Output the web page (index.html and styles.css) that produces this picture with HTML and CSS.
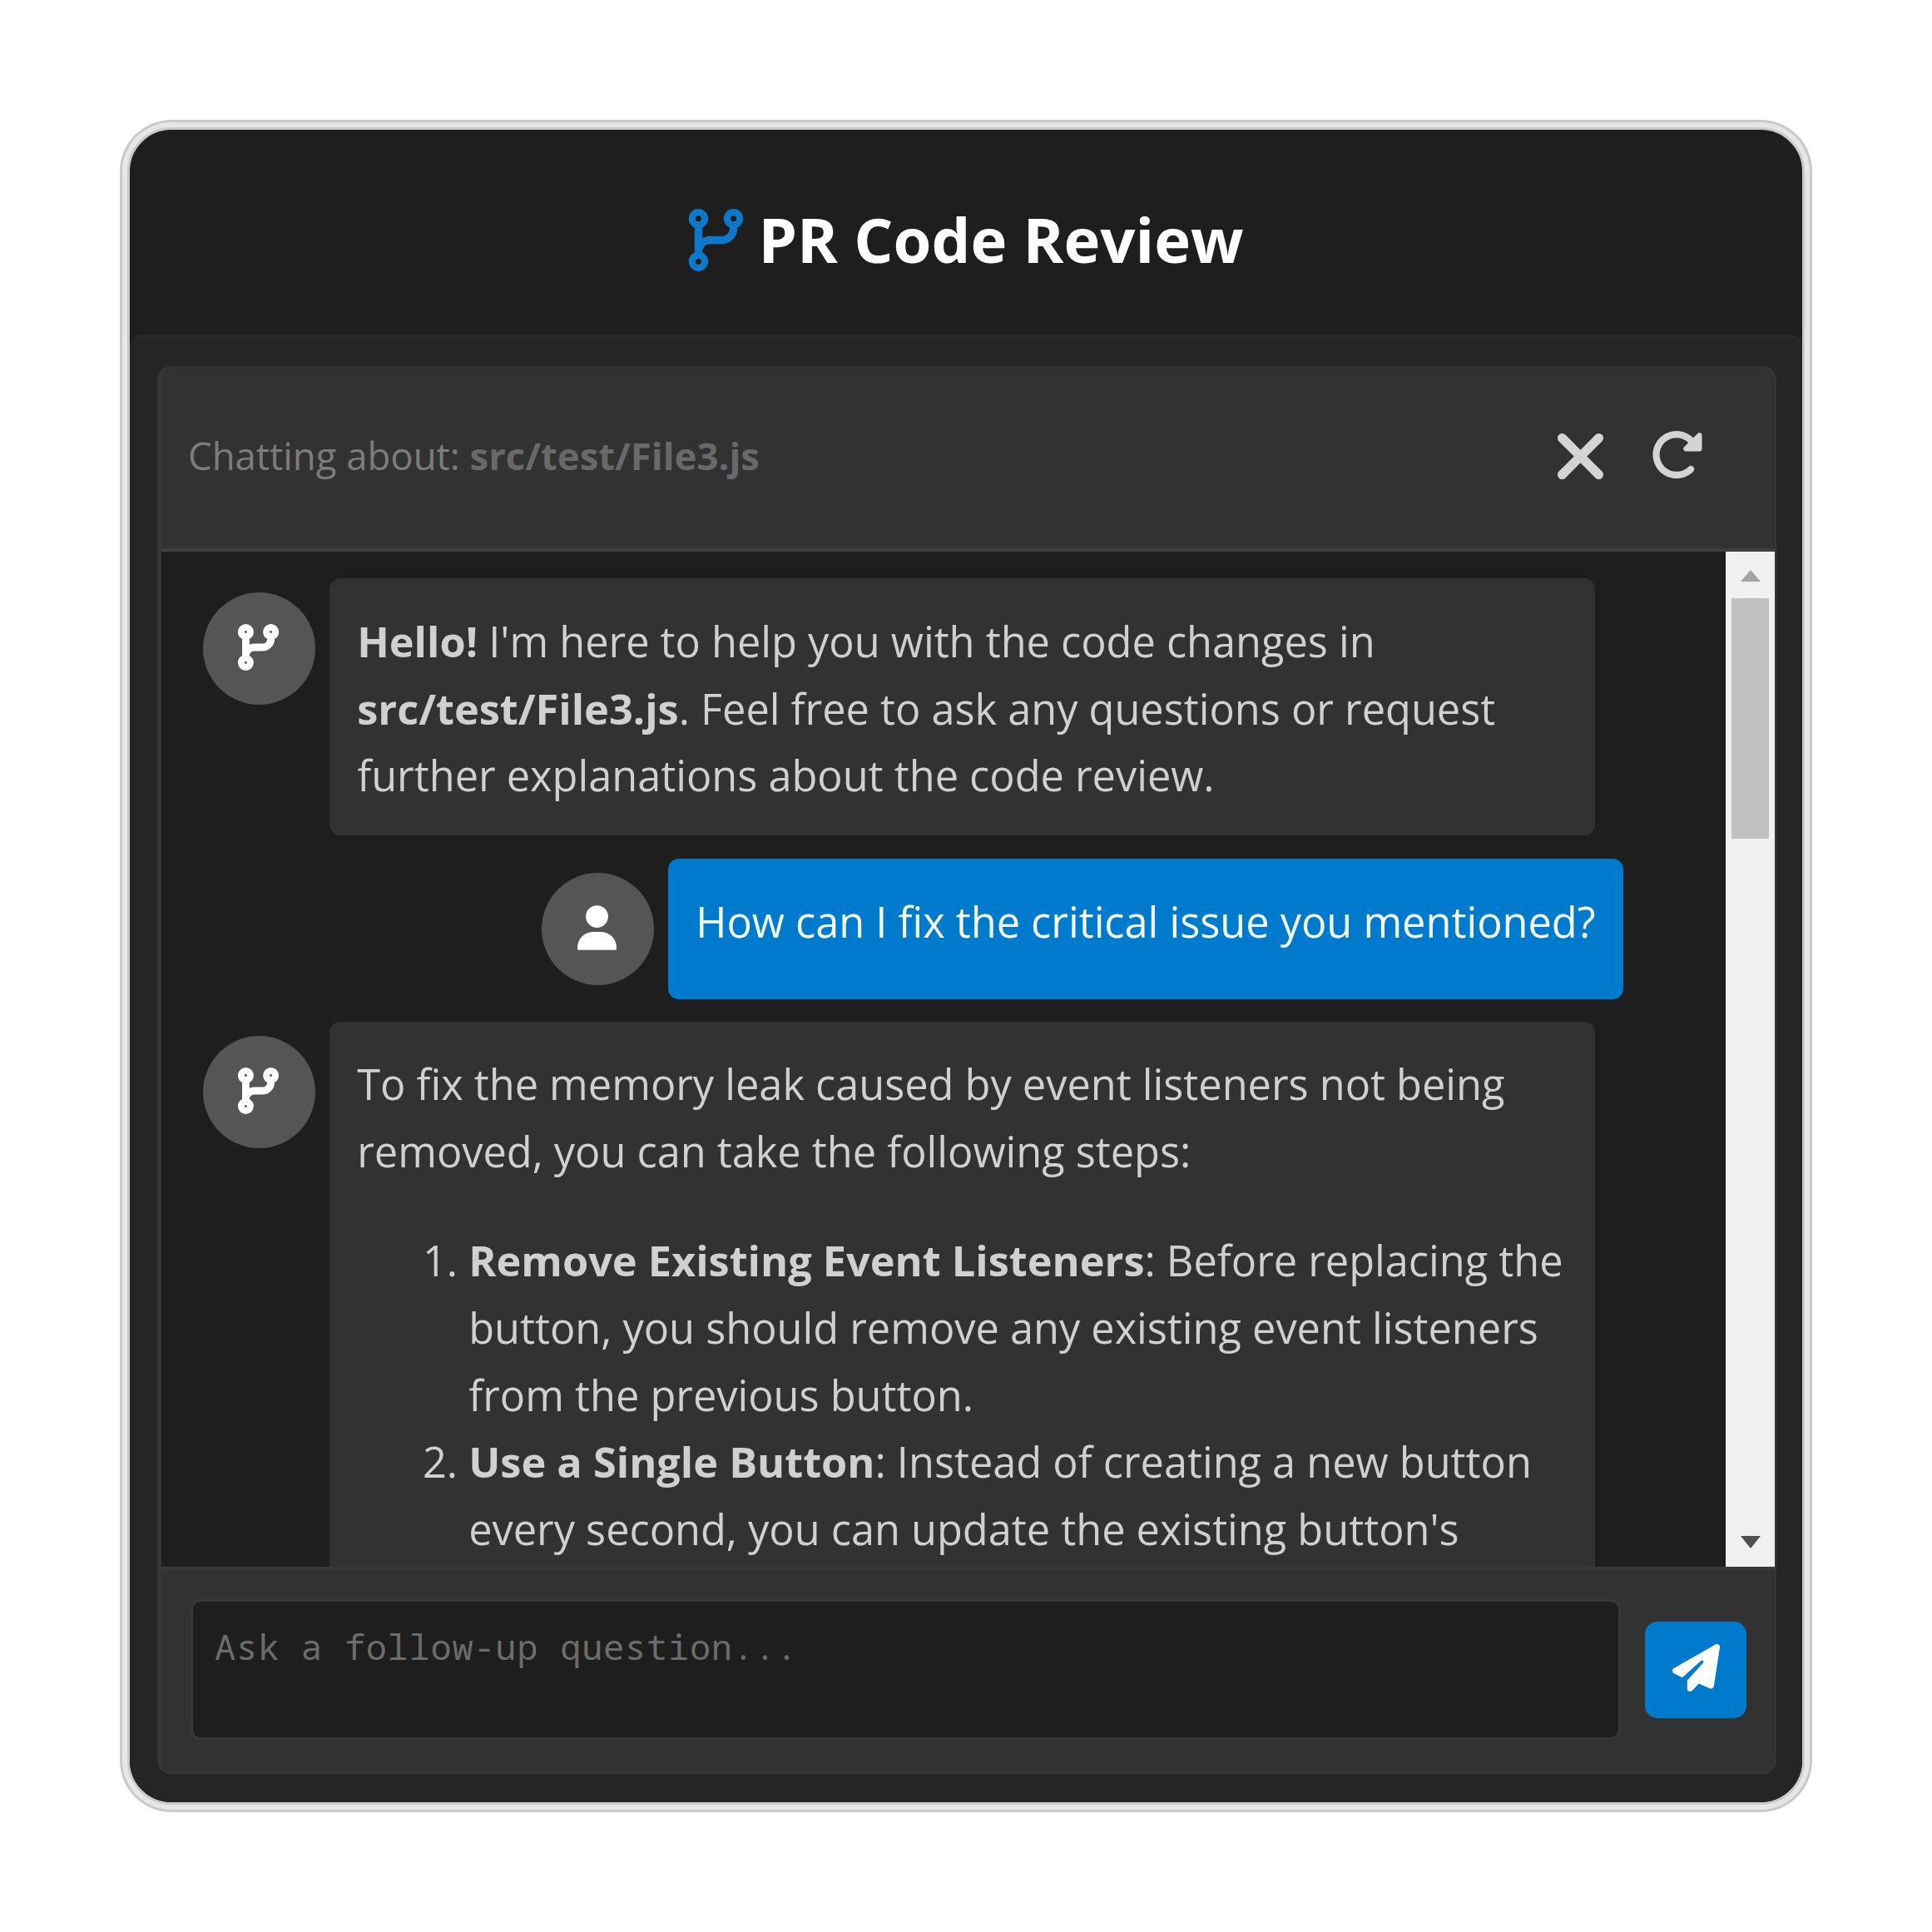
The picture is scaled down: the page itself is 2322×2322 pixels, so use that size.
FILE: index.html
```html
<!DOCTYPE html>
<html lang="en">
<head>
<meta charset="utf-8">
<title>PR Code Review</title>
<link rel="stylesheet" href="styles.css">
</head>
<body>
<svg class="defs" aria-hidden="true">
  <symbol id="branch" viewBox="0 0 448 512" overflow="visible"><path d="M80 104a24 24 0 1 0 0-48 24 24 0 1 0 0 48zm80-24c0 32.8-19.7 61-48 73.3v87.8c18.8-10.9 40.7-17.1 64-17.1h96c35.3 0 64-28.7 64-64v-6.7C307.7 141 288 112.8 288 80c0-44.2 35.8-80 80-80s80 35.8 80 80c0 32.8-19.7 61-48 73.3V160c0 70.7-57.3 128-128 128H176c-35.3 0-64 28.7-64 64v6.7c28.3 12.3 48 40.5 48 73.3c0 44.2-35.8 80-80 80s-80-35.8-80-80c0-32.8 19.7-61 48-73.3V352 153.3C19.7 141 0 112.8 0 80C0 35.8 35.8 0 80 0s80 35.8 80 80zm232 0a24 24 0 1 0 -48 0 24 24 0 1 0 48 0zM80 456a24 24 0 1 0 0-48 24 24 0 1 0 0 48z"/></symbol>
</svg>
<main class="window">
  <header class="titlebar">
    <svg class="title-icon"><use href="#branch"/></svg>
    <h1 class="title">PR Code Review</h1>
  </header>
  <div class="body">
    <section class="panel">
      <div class="chat-head">
        <p class="about">Chatting about: <strong>src/test/File3.js</strong></p>
        <div class="actions">
          <svg class="close" viewBox="32 96 320 320"><path d="M342.6 150.6c12.5-12.5 12.5-32.8 0-45.3s-32.8-12.5-45.3 0L192 210.7 86.6 105.4c-12.5-12.5-32.8-12.5-45.3 0s-12.5 32.8 0 45.3L146.7 256 41.4 361.4c-12.5 12.5-12.5 32.8 0 45.3s32.8 12.5 45.3 0L192 301.3 297.4 406.6c12.5 12.5 32.8 12.5 45.3 0s12.5-32.8 0-45.3L237.3 256 342.6 150.6z"/></svg>
          <svg class="reload" viewBox="32 32 464 448"><path d="M463.5 224H472c13.3 0 24-10.7 24-24V72c0-9.7-5.8-18.5-14.8-22.2s-19.3-1.7-26.2 5.2L413.4 96.6c-87.6-86.5-228.7-86.2-315.8 1c-87.5 87.5-87.5 229.3 0 316.8s229.3 87.5 316.8 0c12.5-12.5 12.5-32.8 0-45.3s-32.8-12.5-45.3 0c-62.5 62.5-163.8 62.5-226.3 0s-62.5-163.8 0-226.3c62.2-62.2 162.7-62.5 225.3-1L327 183c-6.9 6.9-8.9 17.2-5.2 26.2s12.5 14.8 22.2 14.8H463.5z"/></svg>
        </div>
      </div>
      <div class="chat">
        <div class="messages">
          <article class="message">
            <div class="avatar bot"><svg><use href="#branch"/></svg></div>
            <div class="bubble"><p><strong>Hello!</strong> I'm here to help you with the code changes in<br><strong>src/test/File3.js</strong>. Feel free to ask any questions or request<br>further explanations about the code review.</p></div>
          </article>
          <article class="message user">
            <div class="avatar"><svg viewBox="0 0 448 512"><path d="M224 256A128 128 0 1 0 224 0a128 128 0 1 0 0 256zm-45.7 48C79.8 304 0 383.8 0 482.3C0 505 3 512 12 512H436c9 0 12-7 12-29.7C448 383.8 368.2 304 269.7 304H178.3z"/></svg></div>
            <div class="bubble"><p>How can I fix the critical issue you mentioned?</p></div>
          </article>
          <article class="message">
            <div class="avatar bot"><svg><use href="#branch"/></svg></div>
            <div class="bubble reply">
              <p>To fix the memory leak caused by event listeners not being<br>removed, you can take the following steps:</p>
              <ol class="steps">
                <li><strong>Remove Existing Event Listeners</strong>: Before replacing the<br>button, you should remove any existing event listeners<br>from the previous button.</li>
                <li><strong>Use a Single Button</strong>: Instead of creating a new button<br>every second, you can update the existing button's</li>
              </ol>
            </div>
          </article>
        </div>
        <div class="scrollbar">
          <svg class="arrow up" viewBox="0 0 24 14"><path d="M12 0 24 14H0z"/></svg>
          <div class="thumb"></div>
          <svg class="arrow down" viewBox="0 0 24 15"><path d="M0 0H24L12 15z"/></svg>
        </div>
      </div>
      <div class="composer">
        <div class="input">Ask a follow-up question...</div>
        <div class="send"><svg viewBox="0 0 512 512"><path d="M498.1 5.6c10.1 7 15.4 19.1 13.5 31.2l-64 416c-1.5 9.7-7.4 18.2-16 23s-18.9 5.4-28 1.6L284 427.7l-68.5 74.1c-8.9 9.7-22.9 12.9-35.2 8.1S160 493.2 160 480V396.4c0-4 1.5-7.8 4.2-10.7L331.8 202.8c5.8-6.3 5.6-16-.4-22s-15.7-6.4-22-.7L106 360.8 17.7 316.6C7.1 311.3 .3 300.7 0 288.9s5.9-22.8 16.1-28.7l448-256c10.7-6.1 23.9-5.5 34 1.4z"/></svg></div>
      </div>
    </section>
  </div>
</main>
</body>
</html>
```

FILE: styles.css
```css
* { box-sizing: border-box; }

body {
  margin: 0;
  padding: 153px;
  background: #fff;
  font-family: "Open Sans", sans-serif;
}

p, h1, ol { margin: 0; }
svg { display: block; fill: currentColor; }
.defs { display: none; }

.window {
  display: flex;
  flex-direction: column;
  width: 2016px;
  height: 2016px;
  border: 3px solid #c9c9c9;
  border-radius: 53px;
  box-shadow: 0 0 0 6px #e6e6e6, 0 0 0 9px #c9c9c9;
  background: #1e1e1e;
  overflow: hidden;
}

.titlebar {
  display: flex;
  flex: none;
  align-items: center;
  justify-content: center;
  gap: 17px;
  height: 246px;
  padding-top: 19px;
}
.title-icon {
  width: 67px;
  height: 75px;
  color: #0e79c9;
}
.title {
  margin-bottom: 2px;
  color: #fff;
  font-size: 74.2px;
  line-height: 100px;
  font-weight: 700;
  white-space: nowrap;
}

.body {
  flex: 1;
  min-height: 0;
  padding: 32px 31px 34px 33px;
  border-top: 6px solid #282828;
  border-radius: 14px 14px 0 0;
  background: #252525;
}

.panel {
  display: flex;
  flex-direction: column;
  height: 100%;
  border: solid #363636;
  border-width: 1px 2px 2px 5px;
  border-radius: 16px;
  background: #323232;
  overflow: hidden;
}

.chat-head {
  display: flex;
  flex: none;
  align-items: center;
  justify-content: space-between;
  height: 222px;
  padding: 0 87px 4px 32px;
  border-bottom: 4px solid #3e3e3e;
}
.about {
  margin-bottom: 3px;
  color: #7c7c7c;
  font-size: 45.5px;
  line-height: 64px;
  white-space: nowrap;
}
.about strong { color: #696969; }
.actions {
  display: flex;
  align-items: center;
  gap: 59px;
  color: #d4d4d4;
}
.close { width: 55px; height: 55px; }
.reload { width: 60px; height: 57px; margin-bottom: 4px; }

.chat {
  display: flex;
  flex: none;
  height: 1220px;
  background: #1e1e1e;
}
.messages {
  display: flex;
  flex: 1;
  flex-direction: column;
  gap: 27.5px;
  padding: 32px 123px 0 50px;
  overflow: hidden;
}
.message {
  display: flex;
  flex: none;
  align-items: flex-start;
  gap: 17px;
}
.avatar {
  display: flex;
  flex: none;
  align-items: center;
  justify-content: center;
  width: 135px;
  height: 135px;
  margin-top: 17px;
  border-radius: 50%;
  background: #555;
  color: #fff;
}
.avatar svg {
  width: 47px;
  height: 54px;
  margin: 0 2px 3px 0;
}
.bot svg {
  overflow: visible;
  stroke: currentColor;
  stroke-width: 20px;
}
.bubble {
  width: 1521px;
  padding: 36px 33.6px 31.2px 33.2px;
  border-radius: 13px;
  background: #323232;
  color: #d0d0d0;
  font-size: 50.48px;
  line-height: 80.7px;
  white-space: nowrap;
}
.reply { padding-top: 35px; }
.user { justify-content: flex-end; }
.user .bubble {
  width: 1148px;
  height: 169px;
  background: #007acc;
  color: #f4fbff;
}
.steps {
  margin-top: 50.5px;
  padding-left: 134px;
}

.scrollbar {
  display: flex;
  flex: none;
  flex-direction: column;
  align-items: center;
  width: 59px;
  padding: 22px 0;
  background: #f0f0f0;
}
.arrow { width: 24px; }
.up { height: 14px; color: #a3a3a3; }
.thumb {
  width: 45px;
  height: 289px;
  margin-top: 20px;
  background: #c1c1c1;
}
.down { height: 15px; margin-top: auto; color: #505050; }

.composer {
  display: flex;
  flex: 1;
  align-items: flex-start;
  justify-content: space-between;
  padding: 35px 34px 0 35px;
  border-top: 4px solid #393939;
}
.input {
  width: 1719px;
  height: 169px;
  padding: 28px 26px;
  border: 3px solid #383838;
  border-radius: 12px;
  background: #1e1e1e;
  color: #6c6c6c;
  font-family: "Noto Sans Mono", "DejaVu Sans Mono", monospace;
  font-size: 42px;
  line-height: 52px;
  letter-spacing: 0.75px;
  white-space: nowrap;
}
.send {
  display: flex;
  align-items: center;
  justify-content: center;
  width: 122px;
  height: 116px;
  margin-top: 27px;
  border-radius: 15px;
  background: #007acc;
  color: #fff;
}
.send svg {
  width: 57px;
  height: 57px;
  margin-bottom: 6px;
}
```
